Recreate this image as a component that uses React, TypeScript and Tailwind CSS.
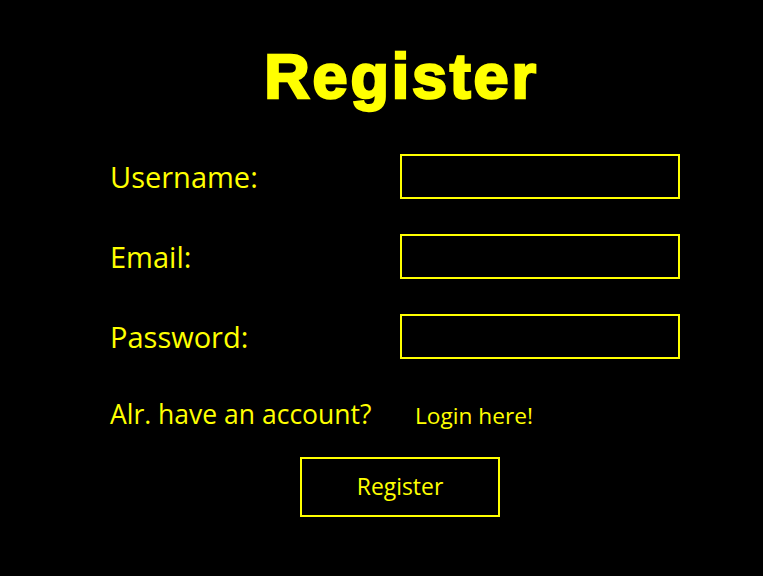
import { useState } from "react";

const fields = [
    { label: "Username:", type: "text" },
    { label: "Email:", type: "email" },
    { label: "Password:", type: "password" },
];

export default function App() {
    const [values, setValues] = useState<Record<string, string>>({});

    return (
        <div className="min-h-[576px] w-full bg-black text-[#ffff00] font-['Open_Sans',sans-serif] flex flex-col items-center">
            {/* title */}
            <h1 className="mt-[40px] text-[63px] leading-[72px] font-black tracking-[2.8px] font-['Liberation_Sans',Arial,sans-serif] [-webkit-text-stroke:2.5px_#ffff00] ml-[40px]">
                Register
            </h1>

            <form className="mt-[42px] grid grid-cols-[290px_280px] gap-y-[35px] ml-[27px]" onSubmit={(e) => e.preventDefault()}>
                {fields.map((f) => (
                    <div key={f.label} className="contents">
                        <label className="text-[29px] leading-[45px]">{f.label}</label>
                        <input
                            type={f.type}
                            value={values[f.label] ?? ""}
                            onChange={(e) => setValues({ ...values, [f.label]: e.target.value })}
                            className="h-[45px] border-2 border-[#ffff00] bg-black px-2 text-[20px] text-[#ffff00] outline-none"
                        />
                    </div>
                ))}

                <div className="col-span-2 flex items-baseline leading-[34px] mt-[3px]">
                    <span className="text-[26.5px] w-[305px]">Alr. have an account?</span>
                    <a href="#" className="text-[22.7px]">Login here!</a>
                </div>

                <div className="col-span-2 flex justify-center -mt-[11px] pl-[10px]">
                    <button type="submit" className="w-[200px] h-[60px] border-2 border-[#ffff00] text-[22.9px]">
                        Register
                    </button>
                </div>
            </form>
        </div>
    );
}
